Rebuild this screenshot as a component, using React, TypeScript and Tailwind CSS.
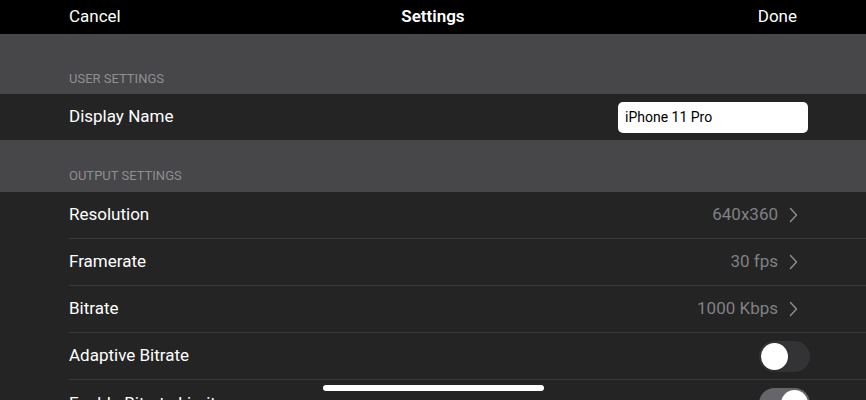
import React from "react";

function Chevron() {
    return (
        <svg width="9" height="16" viewBox="0 0 9 16" fill="none" className="ml-[11px]">
            <path d="M1.5 1.5L7.5 8L1.5 14.5" stroke="#8e8e93" strokeWidth="1.4" strokeLinecap="round" strokeLinejoin="round"/>
        </svg>
    );
}

function Toggle({on}: { on: boolean }) {
    return (
        <div className={on
            ? "w-[51px] h-[31px] rounded-full bg-[#66666a] flex items-center justify-end px-[2px]"
            : "w-[51px] h-[31px] rounded-full bg-[#333336] flex items-center justify-start px-[2px]"}>
            <div className="w-[27px] h-[27px] rounded-full bg-white shadow"/>
        </div>
    );
}

function ValueRow({label, value}: { label: string, value: string }) {
    return (
        <div className="h-[47px] pl-[69px] bg-[#242424]">
            <div className="h-full flex items-center justify-between border-b border-[#38383a] pr-[68px]">
                <span className="text-white text-[17px]">{label}</span>
                <div className="flex items-center">
                    <span className="text-[#808085] text-[17px]">{value}</span>
                    <Chevron/>
                </div>
            </div>
        </div>
    );
}

function ToggleRow({label, on, last}: { label: string, on: boolean, last?: boolean }) {
    return (
        <div className="h-[47px] pl-[69px] bg-[#242424]">
            <div className={last
                ? "h-full flex items-center justify-between pr-[56px]"
                : "h-full flex items-center justify-between border-b border-[#38383a] pr-[56px]"}>
                <span className="text-white text-[17px]">{label}</span>
                <Toggle on={on}/>
            </div>
        </div>
    );
}

export default function App() {
    return (
        <div className="relative w-[866px] h-[400px] overflow-hidden bg-[#242424] font-['Roboto',sans-serif]">
            <header className="h-[34px] bg-black grid grid-cols-3 items-center px-[69px] text-white text-[17px]">
                <span>Cancel</span>
                <span className="text-center font-semibold">Settings</span>
                <span className="text-right">Done</span>
            </header>
            <div className="h-[60px] bg-[#47474a] flex items-end pl-[69px] pb-[6px]">
                <span className="text-[13px] text-[#8e8e93] uppercase">User Settings</span>
            </div>
            <div className="h-[46px] bg-[#242424] flex items-center justify-between pl-[69px] pr-[58px]">
                <span className="text-white text-[17px]">Display Name</span>
                <div className="w-[190px] h-[31px] rounded-[5px] bg-white flex items-center px-[7px] text-[14px] text-black">
                    iPhone 11 Pro
                </div>
            </div>
            <div className="h-[52px] bg-[#47474a] flex items-end pl-[69px] pb-[7px]">
                <span className="text-[13px] text-[#8e8e93] uppercase">Output Settings</span>
            </div>
            <ValueRow label="Resolution" value="640x360"/>
            <ValueRow label="Framerate" value="30 fps"/>
            <ValueRow label="Bitrate" value="1000 Kbps"/>
            <ToggleRow label="Adaptive Bitrate" on={false}/>
            <ToggleRow label="Enable Bitrate Limiter" on={true} last/>
            <div className="absolute left-[323px] top-[385px] w-[221px] h-[6px] rounded-full bg-white"/>
        </div>
    );
}
